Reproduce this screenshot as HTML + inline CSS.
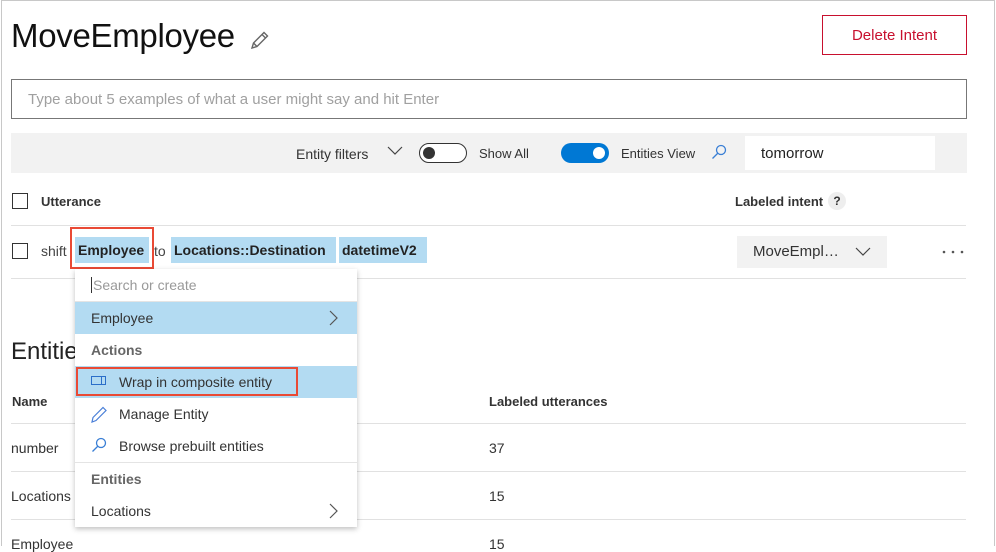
<!DOCTYPE html>
<html><head><meta charset="utf-8"><style>
*{margin:0;padding:0;box-sizing:border-box}
body{width:996px;height:546px;overflow:hidden;background:#fff;font-family:"Liberation Sans",sans-serif;color:#333;position:relative}
.a{position:absolute;white-space:nowrap}
.frame{position:absolute;left:1px;top:0;width:994px;height:546px;border:1px solid #c8c8c8;border-bottom:none}
.line{position:absolute;height:1px;background:#e1e1e1;left:11px;width:955px}
.chip{position:absolute;top:237px;height:26px;background:#b3dbf2;font-size:14px;font-weight:bold;color:#222;line-height:26px;padding-left:3px}
.cb{position:absolute;width:16px;height:16px;border:1px solid #333;background:#fff}
.mi{position:absolute;left:75px;width:282px;height:32px;font-size:14px;line-height:32px;padding-left:16px;color:#333}
.hd{font-weight:bold;color:#666}
.hl{background:#b3dbf2}
</style></head><body>
<div class="frame"></div>
<div class="a" style="left:11px;top:17px;font-size:33px;color:#111;letter-spacing:-0.3px">MoveEmployee</div>
<svg class="a" style="left:249px;top:29px" width="22" height="22" viewBox="0 0 22 22"><path d="M3 19 L4.5 14 L15 3.5 L18.5 7 L8 17.5 Z M13 5.5 L16.5 9 M4.5 14 L8 17.5" fill="none" stroke="#666" stroke-width="1.4"/></svg>
<div class="a" style="left:822px;top:15px;width:145px;height:40px;border:1px solid #c8102e;color:#c8102e;font-size:15px;text-align:center;line-height:40px">Delete Intent</div>
<div class="a" style="left:11px;top:79px;width:956px;height:40px;border:1px solid #777;color:#a0a0a0;font-size:15px;line-height:40px;padding-left:16px">Type about 5 examples of what a user might say and hit Enter</div>
<div class="a" style="left:11px;top:133px;width:956px;height:40px;background:#f2f2f2"></div>
<div class="a" style="left:296px;top:146px;font-size:14px;color:#333">Entity filters</div>
<svg class="a" style="left:387px;top:146px" width="16" height="10"><path d="M1 1 L8 8 L15 1" fill="none" stroke="#444" stroke-width="1.2"/></svg>
<div class="a" style="left:419px;top:143px;width:48px;height:20px;border:1px solid #333;border-radius:10px;background:#fff"></div>
<div class="a" style="left:423px;top:147px;width:12px;height:12px;border-radius:6px;background:#333"></div>
<div class="a" style="left:479px;top:146px;font-size:13px;color:#333">Show All</div>
<div class="a" style="left:561px;top:143px;width:48px;height:20px;border-radius:10px;background:#0078d4"></div>
<div class="a" style="left:593px;top:147px;width:12px;height:12px;border-radius:6px;background:#fff"></div>
<div class="a" style="left:621px;top:146px;font-size:13px;color:#333">Entities View</div>
<svg class="a" style="left:711px;top:144px" width="16" height="16"><circle cx="10" cy="6" r="4.5" fill="none" stroke="#3a7fd5" stroke-width="1.3"/><path d="M7 9 L1.5 14.5" stroke="#3a7fd5" stroke-width="1.3"/></svg>
<div class="a" style="left:745px;top:136px;width:190px;height:34px;background:#fff;font-size:15px;line-height:36px;padding-left:16px;color:#222">tomorrow</div>
<div class="cb" style="left:12px;top:193px"></div>
<div class="a" style="left:41px;top:194px;font-size:13px;font-weight:bold;color:#333">Utterance</div>
<div class="a" style="left:735px;top:194px;font-size:13px;font-weight:bold;color:#333">Labeled intent</div>
<div class="a" style="left:828px;top:192px;width:18px;height:18px;border-radius:9px;background:#eee;font-size:12px;font-weight:bold;text-align:center;line-height:18px">?</div>
<div class="line" style="top:225px"></div>
<div class="cb" style="left:12px;top:243px"></div>
<div class="a" style="left:41px;top:243px;font-size:14px;color:#444">shift</div>
<div class="chip" style="left:75px;width:74px">Employee</div>
<div class="a" style="left:70px;top:227px;width:84px;height:42px;border:2px solid #e94a35"></div>
<div class="a" style="left:154px;top:243px;font-size:14px;color:#444">to</div>
<div class="chip" style="left:171px;width:165px">Locations::Destination</div>
<div class="chip" style="left:339px;width:88px">datetimeV2</div>
<div class="a" style="left:737px;top:236px;width:150px;height:32px;background:#f2f2f2;font-size:15px;line-height:32px;padding-left:16px;color:#333">MoveEmpl…</div>
<svg class="a" style="left:855px;top:247px" width="16" height="10"><path d="M1 1 L8 8 L15 1" fill="none" stroke="#444" stroke-width="1.2"/></svg>
<svg class="a" style="left:940px;top:249px" width="28" height="6"><circle cx="4" cy="3" r="1.3" fill="#555"/><circle cx="13" cy="3" r="1.3" fill="#555"/><circle cx="22" cy="3" r="1.3" fill="#555"/></svg>
<div class="line" style="top:278px"></div>
<div class="a" style="left:11px;top:338px;font-size:24px;color:#222">Entities</div>
<div class="a" style="left:12px;top:394px;font-size:13px;font-weight:bold;color:#333">Name</div>
<div class="a" style="left:489px;top:394px;font-size:13px;font-weight:bold;color:#333">Labeled utterances</div>
<div class="line" style="top:423px"></div>
<div class="a" style="left:11px;top:440px;font-size:14px">number</div>
<div class="a" style="left:489px;top:440px;font-size:14px">37</div>
<div class="line" style="top:471px"></div>
<div class="a" style="left:11px;top:488px;font-size:14px">Locations</div>
<div class="a" style="left:489px;top:488px;font-size:14px">15</div>
<div class="line" style="top:519px"></div>
<div class="a" style="left:11px;top:536px;font-size:14px">Employee</div>
<div class="a" style="left:489px;top:536px;font-size:14px">15</div>
<div class="a" style="left:75px;top:269px;width:282px;height:258px;background:#fff;box-shadow:0 2px 5px rgba(0,0,0,.25)"></div>
<div class="mi" style="top:269px;color:#999"><span style="border-left:1px solid #333;padding-left:1px">Search or create</span></div>
<div class="a" style="left:75px;top:301px;width:282px;height:1px;background:#e4e4e4"></div>
<div class="mi hl" style="top:302px">Employee</div>
<svg class="a" style="left:329px;top:310px" width="10" height="16"><path d="M1 1 L8 8 L1 15" fill="none" stroke="#555" stroke-width="1.2"/></svg>
<div class="mi hd" style="top:334px">Actions</div>
<div class="mi hl" style="top:366px;padding-left:44px">Wrap in composite entity</div>
<svg class="a" style="left:91px;top:376px" width="16" height="10"><rect x="0.5" y="0.5" width="14" height="8" fill="none" stroke="#2b6fc9"/><path d="M10.5 1 V9" stroke="#2b6fc9"/></svg>
<div class="a" style="left:76px;top:367px;width:222px;height:29px;border:2px solid #e94a35"></div>
<div class="mi" style="top:398px;padding-left:44px">Manage Entity</div>
<svg class="a" style="left:90px;top:405px" width="18" height="18"><path d="M2 17 L3 12.5 L13 2.5 L16 5.5 L6 15.5 Z" fill="none" stroke="#4a7fd8" stroke-width="1.2"/></svg>
<div class="mi" style="top:430px;padding-left:44px">Browse prebuilt entities</div>
<svg class="a" style="left:91px;top:437px" width="16" height="16"><circle cx="10" cy="6" r="4.5" fill="none" stroke="#3a7fd5" stroke-width="1.3"/><path d="M7 9 L1.5 14.5" stroke="#3a7fd5" stroke-width="1.3"/></svg>
<div class="a" style="left:75px;top:462px;width:282px;height:1px;background:#e4e4e4"></div>
<div class="mi hd" style="top:463px">Entities</div>
<div class="mi" style="top:495px">Locations</div>
<svg class="a" style="left:329px;top:503px" width="10" height="16"><path d="M1 1 L8 8 L1 15" fill="none" stroke="#555" stroke-width="1.2"/></svg>
</body></html>
